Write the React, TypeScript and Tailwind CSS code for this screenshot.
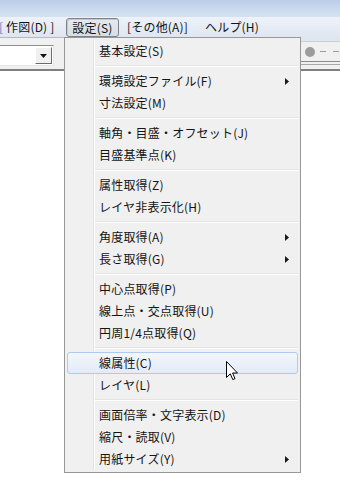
import React from 'react';

type Item = { label: string; sub?: boolean; hi?: boolean } | 'sep';

const items: Item[] = [
  { label: '基本設定(S)' },
  'sep',
  { label: '環境設定ファイル(F)', sub: true },
  { label: '寸法設定(M)' },
  'sep',
  { label: '軸角・目盛・オフセット(J)' },
  { label: '目盛基準点(K)' },
  'sep',
  { label: '属性取得(Z)' },
  { label: 'レイヤ非表示化(H)' },
  'sep',
  { label: '角度取得(A)', sub: true },
  { label: '長さ取得(G)', sub: true },
  'sep',
  { label: '中心点取得(P)' },
  { label: '線上点・交点取得(U)' },
  { label: '円周1/4点取得(Q)' },
  'sep',
  { label: '線属性(C)', hi: true },
  { label: 'レイヤ(L)' },
  'sep',
  { label: '画面倍率・文字表示(D)' },
  { label: '縮尺・読取(V)' },
  { label: '用紙サイズ(Y)', sub: true },
];

const Arrow = () => (
  <svg width="4" height="7" viewBox="0 0 4 7">
    <path d="M0 0 L4 3.5 L0 7 Z" fill="#1a1a1a" />
  </svg>
);

export default function App() {
  return (
    <div
      className="relative w-[340px] h-[484px] overflow-hidden bg-white text-[12px] text-[#141414]"
      style={{ fontFamily: '"Noto Sans CJK JP", "Noto Sans", sans-serif' }}
    >
      {/* title strip */}
      <div className="h-[17px] bg-gradient-to-b from-[#bccfe9] to-[#d6e2f2]" />
      {/* menubar */}
      <div className="h-[20px] flex items-center bg-gradient-to-b from-[#eef3fa] to-[#dfe6f0] leading-none whitespace-nowrap tracking-[0.2px]">
        <div className="w-[6px] text-[#5b7fc4] -ml-[1px]">[</div>
        <div className="w-[61px] pl-[1px]">作図(D) ]</div>
        <div className="w-[53px] h-[19px] mt-[1px] flex items-center justify-center rounded-[3px] border border-[#7d838c] bg-gradient-to-b from-[#e6e9ee] to-[#d9dee5] shadow-[inset_1px_1px_0_#c4c9d0]">
          設定(S)
        </div>
        <div className="w-[86px] pl-[8px]">[その他(A)]</div>
        <div>ヘルプ(H)</div>
      </div>
      {/* toolbar row */}
      <div className="flex h-[34px]">
        <div className="w-[64px] border-t border-[#b4bac3] bg-[#f0f0f0] border-b-[2px] border-b-[#7f7f7f] pt-[7px] overflow-hidden">
          <div className="-ml-[10px] w-[64px] h-[21px] border border-t-[#8e8e8e] border-l-[#8e8e8e] border-r-[#e8e8e8] border-b-[#e8e8e8] bg-white flex justify-end items-center pr-[1px]">
            <div className="w-[17px] h-[17px] bg-[#f0f0f0] border border-t-white border-l-white border-r-[#6b6b6b] border-b-[#6b6b6b] flex items-center justify-center">
              <svg width="7" height="4" viewBox="0 0 7 4">
                <path d="M0 0 L7 0 L3.5 4 Z" fill="#111" />
              </svg>
            </div>
          </div>
        </div>
        <div className="flex-1" />
        <div className="w-[39px] flex flex-col">
          <div className="h-[5px] bg-[#dfe6f0] border-b border-[#c9cfd8]" />
          <div className="h-[19px] bg-[#f0f0f0] flex items-center pl-[4px] gap-[3px]">
            <div className="w-[10px] h-[10px] rounded-full bg-[#9c9c9c]" />
            <div className="w-[6px] h-px bg-[#9c9c9c] ml-[2px]" />
            <div className="w-[6px] h-px bg-[#9c9c9c] ml-[4px]" />
          </div>
          <div className="h-px bg-[#8a8a8a]" />
          <div className="h-[2px] bg-[#f0f0f0]" />
          <div className="h-px bg-[#a8a8a8]" />
          <div className="flex-1 bg-[#f0f0f0] border-b-[2px] border-[#7f7f7f]" />
        </div>
      </div>

      {/* dropdown menu */}
      <div className="absolute left-[64px] top-[37px] w-[237px] border border-[#979797] bg-[#f0f0f0] py-[2px] leading-none tracking-[0.2px]">
        <div className="absolute left-[28px] top-[2px] bottom-[2px] w-px bg-[#e2e3e3]" />
        <div className="absolute left-[29px] top-[2px] bottom-[2px] w-px bg-white" />
        {items.map((it, i) => {
          if (it === 'sep') {
            return (
              <div key={i} className="relative h-[8px] pt-[3px] ml-[30px] mr-[2px]">
                <div className="h-px bg-[#e2e3e3]" />
                <div className="h-px bg-white" />
              </div>
            );
          }
          if (it.hi) {
            return (
              <div
                key={i}
                className="relative h-[22px] mx-[2px] rounded-[3px] border border-[#aecbef] bg-gradient-to-b from-[#f3f7fc] to-[#e3ebf7] flex items-center pl-[31px]"
              >
                {it.label}
              </div>
            );
          }
          return (
            <div key={i} className="relative h-[22px] flex items-center justify-between pl-[34px] pr-[11px]">
              <span>{it.label}</span>
              {it.sub && <Arrow />}
            </div>
          );
        })}
      </div>

      {/* mouse cursor */}
      <svg className="absolute left-[226px] top-[361px]" width="13" height="21" viewBox="0 0 13 21">
        <path
          d="M0.5 0.5 L0.5 16.5 L4.3 12.8 L6.8 18.6 L9 17.6 L6.6 12 L11.5 12 Z"
          fill="#fff"
          stroke="#000"
          strokeWidth="1"
          strokeLinejoin="miter"
        />
      </svg>
    </div>
  );
}
